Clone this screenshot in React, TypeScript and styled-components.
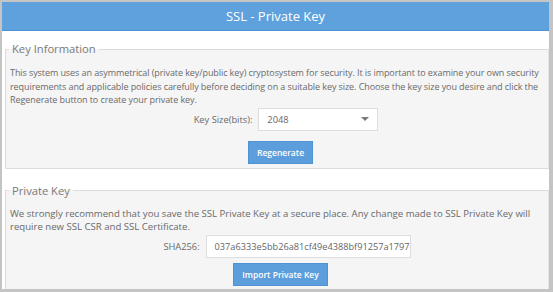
import React from 'react'
import styled, { createGlobalStyle } from 'styled-components'

const GlobalStyle = createGlobalStyle`
  html, body {
    margin: 0;
    padding: 0;
    background: #ffffff;
  }
  body {
    font-family: "Open Sans", "DejaVu Sans", sans-serif;
  }
`

const Frame = styled.div`
  box-sizing: border-box;
  width: 553px;
  height: 292px;
  border-style: solid;
  border-color: #c4c4c4;
  border-width: 2px 4px 3px 2px;
  background: #ffffff;
  overflow: hidden;
  display: flex;
  flex-direction: column;
`

const Header = styled.div`
  flex: none;
  height: 28px;
  background: #5fa1dd;
  border-bottom: 1px solid #4d92d3;
  color: #ffffff;
  font-size: 13px;
  display: flex;
  align-items: center;
  justify-content: center;
`

const Body = styled.div`
  flex: 1;
  padding: 10px 0 0 3px;
  display: flex;
  flex-direction: column;
  gap: 14px;
`

const Section = styled.fieldset<{ pad: number; clipped?: boolean }>`
  margin: 0;
  padding: ${({ pad }) => pad}px 0 ${({ clipped }) => (clipped ? '20px' : '4px')} 4px;
  border: 1px solid #dcdcdc;
  border-right-color: #e4e4e4;
  background: #f5f5f5;
  min-width: 0;
`

const Legend = styled.legend`
  padding: 0 3px;
  margin-left: -1px;
  font-size: 11.2px;
  line-height: 16px;
  color: #7a7a7a;
`

const Text = styled.p<{ size: number; track?: number }>`
  margin: 0;
  max-width: 537px;
  font-size: ${({ size }) => size}px;
  letter-spacing: ${({ track }) => track || 0}px;
  line-height: 13.5px;
  color: #6a6a6a;
`

const FieldRow = styled.div<{ shift: number }>`
  display: flex;
  justify-content: center;
  align-items: center;
  gap: 6px;
  margin-top: 1px;
  padding-left: ${({ shift }) => shift}px;
`

const Label = styled.span`
  font-size: 9.3px;
  color: #6a6a6a;
`

const SelectBox = styled.div`
  box-sizing: border-box;
  width: 120px;
  height: 23px;
  background: #ffffff;
  border: 1px solid #dedede;
  display: flex;
  align-items: center;
  justify-content: space-between;
  padding: 0 8px;
  font-size: 9.3px;
  color: #666666;
`

const Caret = styled.span`
  width: 0;
  height: 0;
  border-left: 4px solid transparent;
  border-right: 4px solid transparent;
  border-top: 4px solid #7a7a7a;
`

const TextBox = styled.div`
  box-sizing: border-box;
  width: 205px;
  height: 23px;
  background: #ffffff;
  border: 1px solid #dedede;
  display: flex;
  align-items: center;
  padding: 0 8px;
  font-size: 9.2px;
  color: #666666;
  white-space: nowrap;
  overflow: hidden;
`

const ButtonRow = styled.div<{ gapTop: number }>`
  display: flex;
  justify-content: center;
  margin-top: ${({ gapTop }) => gapTop}px;
  padding-left: 3px;
`

const Button = styled.button`
  box-sizing: border-box;
  height: 23px;
  padding: 0 8px;
  background: #5c9edb;
  border: 1px solid #4f93d4;
  color: #ffffff;
  font-family: "Open Sans", "DejaVu Sans", sans-serif;
  font-size: 8.5px;
  font-weight: 600;
`

export default function App() {
  return (
    <>
      <GlobalStyle />
      <Frame>
        <Header>SSL - Private Key</Header>
        <Body>
          <Section pad={9}>
            <Legend>Key Information</Legend>
            <Text size={9} track={-0.08}>
              This system uses an asymmetrical (private key/public key) cryptosystem for security. It is important to examine your own security requirements and applicable policies carefully before deciding on a suitable key size. Choose the key size you desire and click the Regenerate button to create your private key.
            </Text>
            <FieldRow shift={14}>
              <Label>Key Size(bits):</Label>
              <SelectBox>
                <span>2048</span>
                <Caret />
              </SelectBox>
            </FieldRow>
            <ButtonRow gapTop={10}>
              <Button>Regenerate</Button>
            </ButtonRow>
          </Section>
          <Section pad={8} clipped>
            <Legend>Private Key</Legend>
            <Text size={9.6}>
              We strongly recommend that you save the SSL Private Key at a secure place. Any change made to SSL Private Key will require new SSL CSR and SSL Certificate.
            </Text>
            <FieldRow shift={16}>
              <Label>SHA256:</Label>
              <TextBox>037a6333e5bb26a81cf49e4388bf91257a1797e2</TextBox>
            </FieldRow>
            <ButtonRow gapTop={5}>
              <Button>Import Private Key</Button>
            </ButtonRow>
          </Section>
        </Body>
      </Frame>
    </>
  )
}
